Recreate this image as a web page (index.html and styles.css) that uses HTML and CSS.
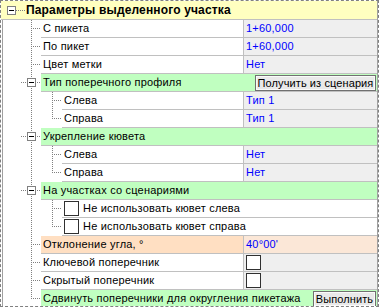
FILE: index.html
```html
<!DOCTYPE html>
<html lang="ru">

<head>
    <meta charset="UTF-8">
    <title>Параметры выделенного участка</title>
    <link rel="stylesheet" href="styles.css">
</head>

<body>
    <div class="frame">
        <div class="grid">

            <!-- category header -->
            <div class="row head">
                <span class="hnode"></span>
                <span class="htext">Параметры выделенного участка</span>
            </div>

            <div class="row">
                <span class="base"></span><span class="u tee"></span>
                <span class="lbl">С пикета</span>
                <span class="val">1+60,000</span>
            </div>
            <div class="row">
                <span class="base"></span><span class="u tee"></span>
                <span class="lbl">По пикет</span>
                <span class="val">1+60,000</span>
            </div>
            <div class="row">
                <span class="base"></span><span class="u tee"></span>
                <span class="lbl">Цвет метки</span>
                <span class="val">Нет</span>
            </div>

            <div class="row">
                <span class="base"></span><span class="u node"></span>
                <span class="cat">Тип поперечного профиля<button class="btn btn-get">Получить из сценария</button></span>
            </div>
            <div class="row">
                <span class="base"></span><span class="u pipe"></span><span class="u tee"></span>
                <span class="lbl">Слева</span>
                <span class="val">Тип 1</span>
            </div>
            <div class="row">
                <span class="base"></span><span class="u pipe"></span><span class="u elbow"></span>
                <span class="lbl">Справа</span>
                <span class="val">Тип 1</span>
            </div>

            <div class="row">
                <span class="base"></span><span class="u node"></span>
                <span class="cat">Укрепление кювета</span>
            </div>
            <div class="row">
                <span class="base"></span><span class="u pipe"></span><span class="u tee"></span>
                <span class="lbl">Слева</span>
                <span class="val">Нет</span>
            </div>
            <div class="row">
                <span class="base"></span><span class="u pipe"></span><span class="u elbow"></span>
                <span class="lbl">Справа</span>
                <span class="val">Нет</span>
            </div>

            <div class="row">
                <span class="base"></span><span class="u node"></span>
                <span class="cat">На участках со сценариями</span>
            </div>
            <div class="row">
                <span class="base"></span><span class="u pipe"></span><span class="u tee"></span>
                <span class="opt"><span class="chk"></span>Не использовать кювет слева</span>
            </div>
            <div class="row">
                <span class="base"></span><span class="u pipe"></span><span class="u elbow"></span>
                <span class="opt"><span class="chk"></span>Не использовать кювет справа</span>
            </div>

            <div class="row">
                <span class="base"></span><span class="u tee"></span>
                <span class="lbl peach">Отклонение угла, °</span>
                <span class="val peach-val">40°00'</span>
            </div>
            <div class="row">
                <span class="base"></span><span class="u tee"></span>
                <span class="lbl">Ключевой поперечник</span>
                <span class="val"><span class="chk"></span></span>
            </div>
            <div class="row">
                <span class="base"></span><span class="u tee"></span>
                <span class="lbl">Скрытый поперечник</span>
                <span class="val"><span class="chk"></span></span>
            </div>
            <div class="row">
                <span class="base"></span><span class="u elbow"></span>
                <span class="cat">Сдвинуть поперечники для округления пикетажа<button class="btn btn-run">Выполнить</button></span>
            </div>

        </div>
    </div>
</body>

</html>
```

FILE: styles.css
```css
html,
body {
    margin: 0;
    padding: 0;
    background: #ffffff;
}

body {
    font-family: 'Liberation Sans', Arial, sans-serif;
    font-size: 11px;
    letter-spacing: 0.2px;
    color: #000000;
}

/* dashed focus frame round the whole grid */
.frame {
    width: 379px;
    height: 307px;
    box-sizing: border-box;
    border: 1px dashed #808080;
    overflow: hidden;
}

.grid {
    height: 100%;
    border-right: 1px solid #a0a0a0;
    display: flex;
    flex-direction: column;
}

.row {
    display: flex;
    height: 18px;
    flex-shrink: 0;
}

/* top level category */
.head {
    height: 19px;
    background: #ffffc0;
    border-bottom: 1px solid #c0c0c0;
    box-sizing: border-box;
    align-items: center;
}

.hnode {
    position: relative;
    width: 9px;
    height: 9px;
    margin-left: 6px;
    box-sizing: border-box;
    border: 1px solid #808080;
    background: #ffffff;
}

.hnode::before {
    content: '';
    position: absolute;
    left: 1px;
    top: 3px;
    width: 5px;
    height: 1px;
    background: #000000;
}

.hnode::after {
    content: '';
    position: absolute;
    left: 8px;
    top: 3px;
    width: 9px;
    height: 1px;
    background: linear-gradient(to right, #808080 50%, transparent 50%);
    background-size: 2px 1px;
}

.htext {
    margin-left: 10px;
    font-weight: bold;
    font-size: 12px;
    letter-spacing: 0.15px;
}

/* tree gutter */
.base {
    width: 19px;
    flex-shrink: 0;
    background: linear-gradient(#a0a0a0, #a0a0a0) 1px 0 / 1px 100% no-repeat;
}

.u {
    position: relative;
    width: 21px;
    flex-shrink: 0;
}

.u::before,
.u::after {
    content: '';
    position: absolute;
}

/* vertical dotted line */
.pipe::before,
.tee::before,
.node::before {
    left: 11px;
    top: 0;
    width: 1px;
    height: 18px;
    background: linear-gradient(#808080 50%, transparent 50%);
    background-size: 1px 2px;
}

.elbow::before {
    left: 11px;
    top: 0;
    width: 1px;
    height: 9px;
    background: linear-gradient(#808080 50%, transparent 50%);
    background-size: 1px 2px;
}

/* horizontal dotted line */
.tee::after,
.elbow::after {
    left: 12px;
    top: 8px;
    width: 9px;
    height: 1px;
    background: linear-gradient(to right, transparent 50%, #808080 50%);
    background-size: 2px 1px;
}

/* expander box with minus */
.node::after {
    left: 7px;
    top: 4px;
    width: 9px;
    height: 9px;
    box-sizing: border-box;
    border: 1px solid #808080;
    background: linear-gradient(#000000, #000000) center / 5px 1px no-repeat, #ffffff;
}

.node {
    background: linear-gradient(to right, transparent 50%, #808080 50%) 16px 8px / 2px 1px repeat-x;
    background-size: 2px 1px;
    background-clip: content-box;
}

/* cells */
.lbl,
.val,
.cat,
.opt {
    box-sizing: border-box;
    height: 18px;
    line-height: 17px;
    border-bottom: 1px solid #c0c0c0;
    white-space: nowrap;
    overflow: hidden;
}

.lbl {
    flex: 1;
    padding-left: 2px;
    background: #ffffff;
}

.val {
    width: 134px;
    flex-shrink: 0;
    padding-left: 2px;
    border-left: 1px solid #c0c0c0;
    background: #efefef;
    color: #0000ff;
}

.cat {
    flex: 1;
    display: flex;
    justify-content: space-between;
    padding-left: 2px;
    background: #c0ffc0;
}

.opt {
    flex: 1;
    display: flex;
    align-items: flex-start;
    background: #ffffff;
}

.peach {
    background: #ffdfc2;
}

.peach-val {
    background: #fbe7d7;
}

.chk {
    width: 15px;
    height: 15px;
    box-sizing: border-box;
    border: 1px solid #303030;
    background: #ffffff;
    margin-top: 1px;
    flex-shrink: 0;
}

.opt .chk {
    margin-left: 2px;
    margin-right: 4px;
}

.val .chk {
    display: block;
}

.btn {
    height: 16px;
    margin: 1px 1px 0 0;
    padding: 0;
    border: 1px solid #707070;
    box-shadow: inset 0 0 0 1px #fafafa;
    background: #e9e9e9;
    font-family: inherit;
    font-size: 11px;
    letter-spacing: 0.1px;
    line-height: 13px;
    color: #000000;
    text-align: center;
    flex-shrink: 0;
}

.btn-get {
    width: 121px;
}

.btn-run {
    width: 63px;
}
```
